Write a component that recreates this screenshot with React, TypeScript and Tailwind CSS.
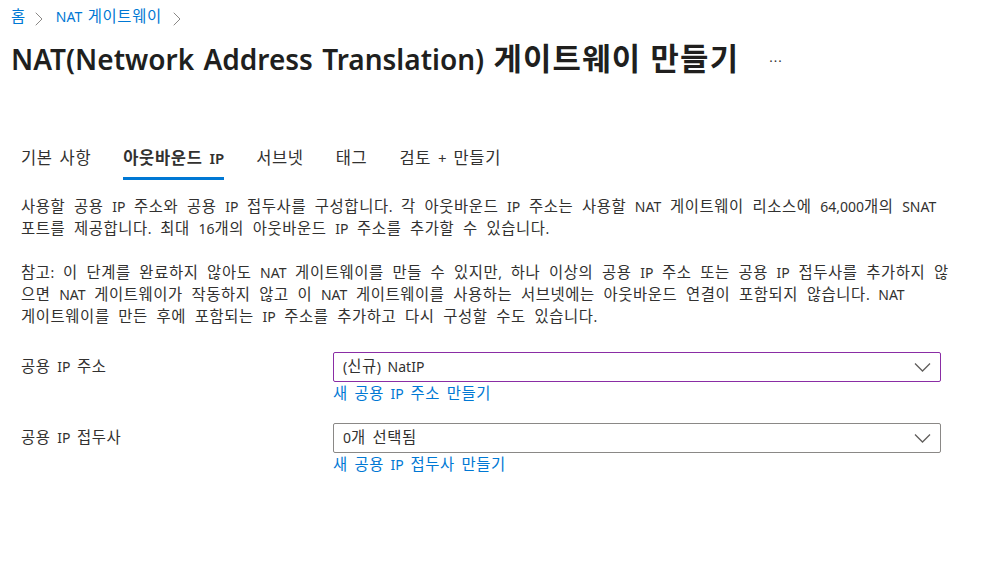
import React from 'react';
import { ChevronRight } from 'lucide-react';

const font = { fontFamily: '"Segoe UI", "Noto Sans", "Noto Sans CJK KR", sans-serif' };

const hangulSplit = /([\uac00-\ud7a3]+)/;
const hangulTest = /[\uac00-\ud7a3]/;

const K = ({ t }: { t: string }) => (
  <>
    {t.split(hangulSplit).map((part, i) =>
      hangulTest.test(part) ? (
        <span key={i} className="text-[1.1em] tracking-[0.04em]">
          {part}
        </span>
      ) : (
        part
      )
    )}
  </>
);

const Caret = () => (
  <svg width="17" height="10" viewBox="0 0 17 10" fill="none" className="text-[#605e5c]">
    <path d="M1 1.5 8.5 9 16 1.5" stroke="currentColor" strokeWidth="1.3" />
  </svg>
);

const tabs = ['기본 사항', '아웃바운드 IP', '서브넷', '태그', '검토 + 만들기'];

const Field = ({ label, value, link, focused }: { label: string; value: string; link: string; focused?: boolean }) => (
  <div className="flex [word-spacing:3px]">
    <div className="w-[312px] pt-[4px] text-[14px] leading-[22px] text-[#323130]">
      <K t={label} />
    </div>
    <div className="w-[608px]">
      <div
        className={`flex h-[30px] items-center justify-between rounded-[2px] border pl-[9px] pr-[9px] text-[14px] text-[#323130] ${
          focused ? 'border-[#8a2da5]' : 'border-[#8a8886]'
        }`}
      >
        <span>
          <K t={value} />
        </span>
        <Caret />
      </div>
      <a className="mt-[1px] block text-[14px] leading-[22px] text-[#0078d4]">
        <K t={link} />
      </a>
    </div>
  </div>
);

const body1 = [
  '사용할 공용 IP 주소와 공용 IP 접두사를 구성합니다. 각 아웃바운드 IP 주소는 사용할 NAT 게이트웨이 리소스에 64,000개의 SNAT',
  '포트를 제공합니다. 최대 16개의 아웃바운드 IP 주소를 추가할 수 있습니다.',
];
const body2 = [
  '참고: 이 단계를 완료하지 않아도 NAT 게이트웨이를 만들 수 있지만, 하나 이상의 공용 IP 주소 또는 공용 IP 접두사를 추가하지 않',
  '으면 NAT 게이트웨이가 작동하지 않고 이 NAT 게이트웨이를 사용하는 서브넷에는 아웃바운드 연결이 포함되지 않습니다. NAT',
  '게이트웨이를 만든 후에 포함되는 IP 주소를 추가하고 다시 구성할 수도 있습니다.',
];

const App = () => {
  return (
    <div className="min-h-[566px] w-[995px] bg-white" style={font}>
      <div className="mt-[6px] flex h-[22px] items-center pl-[11px] text-[14px] leading-[22px] text-[#0078d4]">
        <span>
          <K t="홈" />
        </span>
        <ChevronRight className="ml-[1px] mt-[4px] h-6 w-6 shrink-0 text-[#8a8886]" strokeWidth={1} />
        <span className="ml-[5px] [word-spacing:2px]">
          <K t="NAT 게이트웨이" />
        </span>
        <ChevronRight className="ml-[3px] mt-[4px] h-6 w-6 shrink-0 text-[#8a8886]" strokeWidth={1} />
      </div>
      <div className="flex items-center pl-[11px] pt-[12px]">
        <h1 className="whitespace-nowrap text-[28px] font-semibold leading-[36px] text-[#201f1e] [word-spacing:2px]">
          <K t="NAT(Network Address Translation) 게이트웨이 만들기" />
        </h1>
        <span className="ml-[30px] mt-[6px] text-[13px] tracking-[1px] text-[#323130]">···</span>
      </div>

      <div className="mt-[69px] flex gap-[32px] pl-[21px] [word-spacing:3px]">
        {tabs.map((t, i) => (
          <div key={t} className="flex flex-col">
            <span className={`whitespace-nowrap text-[15px] leading-[24px] text-[#323130] ${i === 1 ? 'font-semibold' : ''}`}>
              <K t={t} />
            </span>
            <span className={`mt-[7px] h-[3px] ${i === 1 ? 'bg-[#0078d4]' : 'bg-transparent'}`} />
          </div>
        ))}
      </div>

      <div className="mt-[16px] pl-[21px] text-[14px] leading-[22px] text-[#323130] [word-spacing:5px]">
        <div>
          {body1.map((l) => (
            <div key={l} className="whitespace-nowrap">
              <K t={l} />
            </div>
          ))}
        </div>
        <div className="mt-[22px]">
          {body2.map((l) => (
            <div key={l} className="whitespace-nowrap">
              <K t={l} />
            </div>
          ))}
        </div>
      </div>

      <div className="mt-[24px] flex flex-col gap-[18px] pl-[21px]">
        <Field label="공용 IP 주소" value="(신규) NatIP" link="새 공용 IP 주소 만들기" focused />
        <Field label="공용 IP 접두사" value="0개 선택됨" link="새 공용 IP 접두사 만들기" />
      </div>
    </div>
  );
};

export default App;
